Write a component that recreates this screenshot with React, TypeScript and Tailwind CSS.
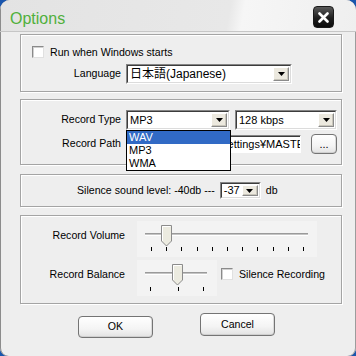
import React from "react";

function Arrow() {
  return (
    <svg width="7" height="4" viewBox="0 0 7 4">
      <path d="M0 0h7L3.5 4z" fill="#000" />
    </svg>
  );
}

function DropButton({ className }: { className: string }) {
  return (
    <div className={`flex items-center justify-center bg-[#ece9df] border border-t-white border-l-white border-b-[#8a8a8a] border-r-[#8a8a8a] shadow-[inset_-1px_-1px_0_#c9c6bb] ${className}`}>
      <Arrow />
    </div>
  );
}

function Combo({ className, text, textClass = "text-[11px]", btn = "w-[16px]" }: { className: string; text: string; textClass?: string; btn?: string }) {
  return (
    <div className={`flex bg-white border border-t-[#858585] border-l-[#858585] border-b-white border-r-white ${className}`}>
      <div className="flex flex-1 min-w-0 border border-t-[#3c3c3c] border-l-[#3c3c3c] border-b-[#dcdcdc] border-r-[#dcdcdc] p-px">
        <span className={`flex flex-1 items-center pl-[1px] whitespace-nowrap overflow-hidden ${textClass}`}>{text}</span>
        <DropButton className={btn} />
      </div>
    </div>
  );
}

function CheckBox() {
  return (
    <div className="w-[12px] h-[12px] bg-white border border-t-[#8a8a8a] border-l-[#8a8a8a] border-b-[#e0e0e0] border-r-[#e0e0e0] shadow-[inset_1px_1px_0_#d0d0d0]" />
  );
}

function XpButton({ className, children }: { className: string; children: React.ReactNode }) {
  return (
    <div className={`flex items-center justify-center rounded-[4px] border border-[#747474] bg-[linear-gradient(#ffffff,#f4f4f4_60%,#e2e2e2)] shadow-[inset_0_-1px_0_#cfcfcf,inset_-1px_0_0_#dadada] ${className}`}>
      {children}
    </div>
  );
}

function Track({ x, w, y }: { x: number; w: number; y: number }) {
  return (
    <g>
      <rect x={x} y={y} width={w} height={1} fill="#9a9a9a" />
      <rect x={x} y={y + 1} width={w} height={1} fill="#c4c4c4" />
      <rect x={x} y={y + 2} width={w} height={1} fill="#ffffff" />
    </g>
  );
}

function Thumb({ x, y }: { x: number; y: number }) {
  return (
    <g>
      <path d={`M${x + 0.5} ${y + 0.5}H${x + 10.5}V${y + 16}L${x + 5.5} ${y + 21}L${x + 0.5} ${y + 16}Z`} fill="#ecebe0" stroke="#8c8c8c" />
      <path d={`M${x + 1.5} ${y + 16}V${y + 1.5}H${x + 9.5}`} fill="none" stroke="#ffffff" />
    </g>
  );
}

const volTicks = [14, 29, 44, 60, 75, 90, 105, 120, 136, 151, 166];

export default function App() {
  return (
    <div className="w-[356px] h-[356px] bg-[#1a56ad] font-['Liberation_Sans','Noto_Sans_CJK_JP',sans-serif] text-[10.6px] text-black">
      <div className="h-[356px] rounded-t-[10px] rounded-b-[8px] overflow-hidden bg-[#eeeeee] shadow-[inset_1px_0_0_#8c8c8c,inset_-1px_0_0_#9c9c9c]">
        {/* title bar */}
        <div className="flex h-[32px] bg-[linear-gradient(100deg,#e3e3e3_0%,#e8e8e8_64%,#f6f6f6_68%,#efefef_100%)] shadow-[inset_0_-1px_0_#c6c6c6,inset_1px_0_0_#8c8c8c]">
          <span className="pl-[10px] pt-[10px] text-[16px] leading-[18px] text-[#50b03c]">Options</span>
          <div className="ml-auto mr-[22px] mt-[6px] flex items-center justify-center w-[21px] h-[22px] rounded-[4px] border border-[#1a1a1a] bg-[linear-gradient(#5a5a5a,#1e1e1e_55%,#0c0c0c)]">
            <svg width="11" height="11" viewBox="0 0 11 11">
              <path d="M1.5 1.5l8 8M9.5 1.5l-8 8" stroke="#ffffff" strokeWidth="2.6" strokeLinecap="round" />
            </svg>
          </div>
        </div>

        {/* general */}
        <div className="ml-[20px] mt-[2px] w-[322px] h-[58px] border border-[#a4a4a4] shadow-[inset_1px_1px_0_#ffffff,1px_1px_0_#ffffff]">
          <div className="flex items-center gap-[6px] pl-[11px] mt-[11px] h-[12px]">
            <CheckBox />
            <span className="leading-[12px]">Run when Windows starts</span>
          </div>
          <div className="flex items-center gap-[5px] mt-[6px]">
            <span className="w-[100px] text-right">Language</span>
            <Combo className="w-[166px] h-[20px]" text="日本語(Japanese)" textClass="text-[12px]" />
          </div>
        </div>

        {/* record */}
        <div className="relative ml-[20px] mt-[7px] w-[322px] h-[66px] border border-[#a4a4a4] shadow-[inset_1px_1px_0_#ffffff,1px_1px_0_#ffffff]">
          <div className="flex items-center gap-[5px] mt-[10px]">
            <span className="w-[100px] text-right">Record Type</span>
            <Combo className="w-[104px] h-[20px]" text="MP3" />
            <Combo className="w-[102px] h-[20px]" text="128 kbps" />
          </div>
          <div className="flex items-center gap-[5px] mt-[4px]">
            <span className="w-[100px] text-right">Record Path</span>
            <div className="flex items-center w-[175px] h-[18px] bg-white border border-t-[#858585] border-l-[#858585] border-b-white border-r-white shadow-[inset_1px_1px_0_#3c3c3c] pl-[2px] overflow-hidden whitespace-nowrap text-[11px]">
              <span className="-ml-[6px]">C:¥Documents and Settings¥MASTER¥My Documents</span>
            </div>
            <XpButton className="ml-[5px] w-[26px] h-[20px] text-[11px]">...</XpButton>
          </div>
          {/* open dropdown list */}
          <div className="absolute left-[105px] top-[30px] w-[105px] h-[41px] bg-white border border-black text-[11px]">
            <div className="h-[13px] leading-[13px] pl-[2px] bg-[#316ac5] text-white">WAV</div>
            <div className="h-[13px] leading-[13px] pl-[2px]">MP3</div>
            <div className="h-[13px] leading-[13px] pl-[2px]">WMA</div>
          </div>
        </div>

        {/* silence level */}
        <div className="ml-[20px] mt-[9px] w-[322px] h-[33px] border border-[#a4a4a4] shadow-[inset_1px_1px_0_#ffffff,1px_1px_0_#ffffff]">
          <div className="flex items-center gap-[5px] pl-[56px] mt-[7px]">
            <span>Silence sound level: -40db ---</span>
            <Combo className="w-[41px] h-[17px]" text="-37" btn="w-[16px]" />
            <span>db</span>
          </div>
        </div>

        {/* volume */}
        <div className="ml-[20px] mt-[8px] w-[322px] h-[89px] border border-[#a4a4a4] shadow-[inset_1px_1px_0_#ffffff,1px_1px_0_#ffffff]">
          <div className="flex items-start gap-[12px] mt-[5px]">
            <span className="w-[104px] text-right mt-[8px] leading-[12px]">Record Volume</span>
            <svg width="180" height="36" viewBox="0 0 180 36">
              <rect width="180" height="36" fill="#f3f3f3" />
              <Track x={8} w={163} y={12} />
              {volTicks.map((t) => (
                <rect key={t} x={t} y={26} width={1} height={4} fill="#000" />
              ))}
              <Thumb x={24} y={4} />
            </svg>
          </div>
          <div className="flex items-start gap-[12px] mt-[3px]">
            <span className="w-[104px] text-right mt-[8px] leading-[12px]">Record Balance</span>
            <svg width="80" height="36" viewBox="0 0 80 36">
              <rect width="80" height="36" fill="#f3f3f3" />
              <Track x={8} w={62} y={12} />
              {[13, 41, 66].map((t) => (
                <rect key={t} x={t} y={27} width={1} height={4} fill="#000" />
              ))}
              <Thumb x={35} y={4} />
            </svg>
            <div className="flex items-center gap-[6px] mt-[8px] -ml-[8px]">
              <CheckBox />
              <span className="leading-[12px]">Silence Recording</span>
            </div>
          </div>
        </div>

        {/* buttons */}
        <div className="flex items-start gap-[47px] pl-[78px] mt-[9px]">
          <XpButton className="mt-[3px] w-[75px] h-[22px]">OK</XpButton>
          <XpButton className="w-[75px] h-[23px]">Cancel</XpButton>
        </div>
      </div>
    </div>
  );
}
